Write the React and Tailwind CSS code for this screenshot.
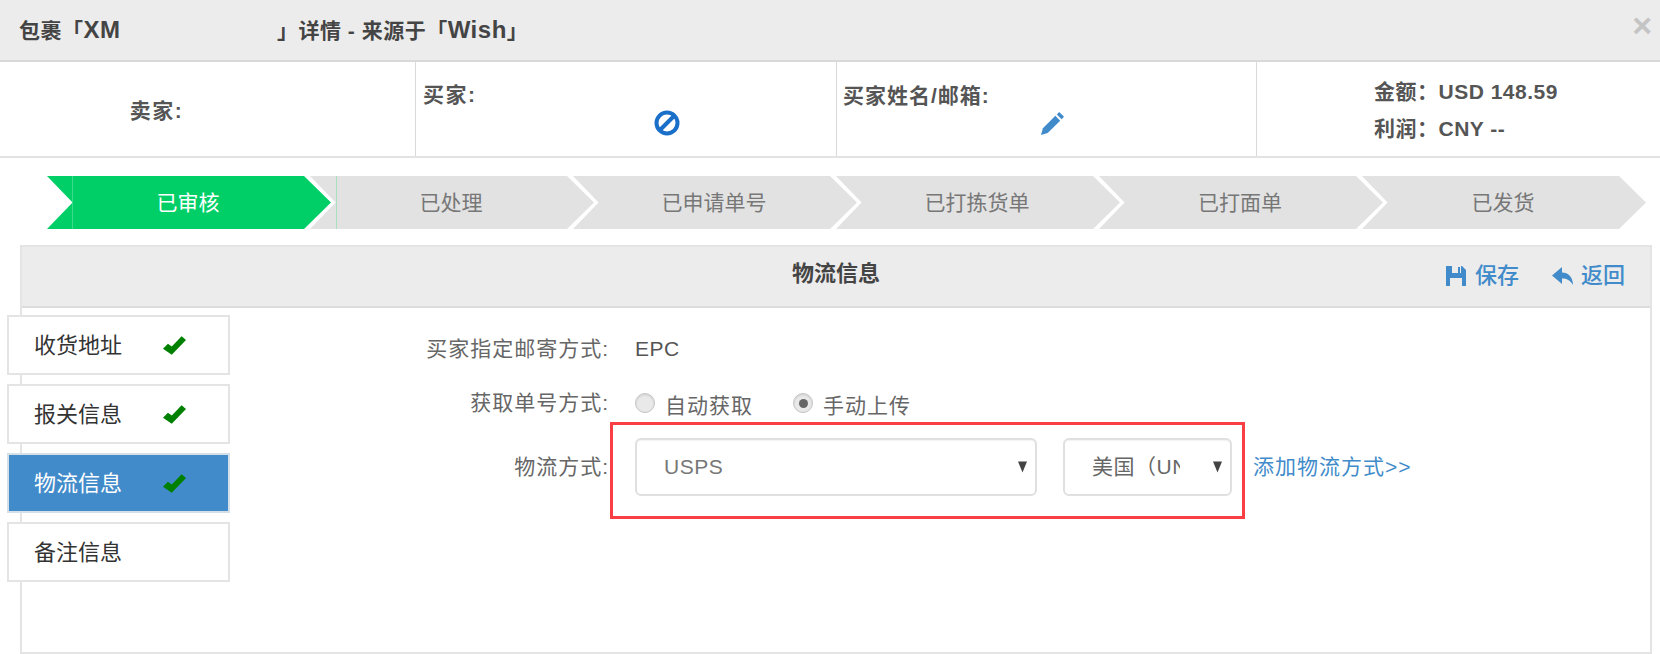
import React from "react";

const FONT = "font-['Liberation_Sans','Noto_Sans_CJK_SC',sans-serif]";

const steps = ["已审核", "已处理", "已申请单号", "已打拣货单", "已打面单", "已发货"];
const tabs = ["收货地址", "报关信息", "物流信息", "备注信息"];

function Caret() {
    return (
        <svg viewBox="0 0 10 12" className="absolute right-[8px] top-1/2 h-[12px] w-[9px] -translate-y-1/2 fill-[#444]">
            <path d="M0 0H10L5 12Z" />
        </svg>
    );
}

function BanIcon() {
    return (
        <svg viewBox="0 0 26 26" className="ml-[231px] mt-[3px] h-[26px] w-[26px] fill-none stroke-[#1a6fc9] stroke-[4]">
            <circle cx="13" cy="13" r="10.5" />
            <path d="M6 20L20 6" />
        </svg>
    );
}

function PencilIcon() {
    return (
        <svg viewBox="0 0 24 24" className="ml-[198px] mt-[4px] h-[23px] w-[23px] fill-[#428bca]">
            <path d="M0 24L2 17L15 4L20 9L7 22Z" />
            <path d="M16.5 2.5L19 0L24 5L21.5 7.5Z" />
        </svg>
    );
}

function CheckIcon() {
    return (
        <svg viewBox="0 0 21 17" className="h-[19px] w-[23px] fill-[#008000]">
            <path d="M0 11.5L4.5 7L8 9.5L17 0L21 3.5L8 17Z" />
        </svg>
    );
}

function SaveIcon() {
    return (
        <svg viewBox="0 0 20 20" className="h-[20px] w-[20px] fill-[#428bca]">
            <path d="M0 0H6V7H12V1H14V7H15V0H16L20 4V20H16V12H4V20H0Z" />
        </svg>
    );
}

function BackIcon() {
    return (
        <svg viewBox="0 0 21 18" className="h-[18px] w-[21px] fill-[#428bca]">
            <path d="M0 8.5L10 0V5.5C16 5.5 21 10 21 18C18 13 15 11.5 10 11.5V17Z" />
        </svg>
    );
}

function Radio({ checked }) {
    return (
        <span className="flex h-[20px] w-[20px] shrink-0 items-center justify-center rounded-full border border-[#c4c4c4] bg-[#e9e9e9] shadow-[inset_0_1px_2px_rgba(0,0,0,0.12)]">
            {checked && <span className="h-[9px] w-[9px] rounded-full bg-[#666]"></span>}
        </span>
    );
}

export default function App() {
    return (
        <div className={`${FONT} relative h-[654px] w-[1660px] overflow-hidden bg-white text-[#555]`}>
            {/* title bar */}
            <div className="flex h-[62px] items-center justify-between border-b-2 border-[#d9d9d9] bg-[#ececec] pl-[19px] pr-[8px]">
                <div className="flex items-baseline text-[21px] font-bold tracking-[0.5px] text-[#444]">
                    <span className="w-[258px] whitespace-nowrap">包裹「<span className="text-[24px]">XM</span></span>
                    <span className="whitespace-nowrap">」详情 - 来源于「<span className="text-[24px]">Wish</span>」</span>
                </div>
                <span className="mb-[10px] text-[34px] font-bold leading-none text-[#c4c4c4]">×</span>
            </div>

            {/* seller / buyer row */}
            <div className="flex h-[96px] border-b-2 border-[#e2e2e2] text-[21px] font-bold tracking-[0.5px] text-[#555]">
                <div className="flex w-[416px] items-center justify-center border-r border-[#d9d9d9] pr-[102px] pt-[4px] tracking-[1.5px]">卖家:</div>
                <div className="flex w-[421px] flex-col border-r border-[#d9d9d9] pl-[7px] pt-[21px]">
                    <span className="leading-[24px] tracking-[1.5px]">买家:</span>
                    <BanIcon />
                </div>
                <div className="flex w-[420px] flex-col border-r border-[#d9d9d9] pl-[6px] pt-[22px]">
                    <span className="leading-[24px] tracking-[1px]">买家姓名/邮箱:</span>
                    <PencilIcon />
                </div>
                <div className="flex flex-col gap-[13px] pl-[117px] pt-[18px] leading-[24px]">
                    <span>金额：USD 148.59</span>
                    <span>利润：CNY --</span>
                </div>
            </div>

            {/* progress steps */}
            <div className="mt-[18px] flex h-[53px] pl-[47px]">
                {steps.map((s, i) => (
                    <div
                        key={s}
                        className={`relative flex h-full w-[284px] shrink-0 items-center justify-center pr-[2px] text-[21px] [clip-path:polygon(0_0,90.5%_0,100%_50%,90.5%_100%,0_100%,9%_50%)] ${i === 0 ? "bg-[#00cf68] text-white" : "-ml-[21px] bg-[#e2e2e2] text-[#777]"}`}
                    >
                        {i === 0 && <span className="absolute inset-y-0 left-[25px] w-px bg-[#3cdc8c]"></span>}
                        {i === 1 && <span className="absolute inset-y-0 left-[26px] w-px bg-[#a8dfc0]"></span>}
                        {s}
                    </div>
                ))}
            </div>

            {/* logistics panel */}
            <div className="ml-[20px] mr-[8px] mt-[16px] h-[409px] border-2 border-[#e4e4e4]">
                <div className="relative flex h-[61px] items-center justify-center border-b-2 border-[#dcdcdc] bg-[#ececec] pb-[6px] text-[22px] font-bold text-[#444]">
                    物流信息
                    <div className="absolute right-[25px] top-[12px] flex gap-[33px] text-[22px] font-medium text-[#428bca]">
                        <span className="flex items-center gap-[9px]"><SaveIcon />保存</span>
                        <span className="flex items-center gap-[8px]"><BackIcon />返回</span>
                    </div>
                </div>

                <div className="flex">
                    {/* side tabs */}
                    <div className="-ml-[15px] mt-[7px] flex w-[223px] shrink-0 flex-col gap-[9px]">
                        {tabs.map((t, i) => (
                            <div
                                key={t}
                                className={`flex h-[60px] items-center border-2 pl-[25px] text-[22px] ${i === 2 ? "border-[#d5dfe8] bg-[#428bca] text-white" : "border-[#e4e4e4] bg-white text-[#333]"}`}
                            >
                                <span className="w-[129px]">{t}</span>
                                {i < 3 && <CheckIcon />}
                            </div>
                        ))}
                    </div>

                    {/* form */}
                    <div className="flex flex-col pt-[26px] text-[21px] tracking-[1px] text-[#666]">
                        <div className="flex h-[30px] items-center">
                            <span className="w-[379px] text-right">买家指定邮寄方式:</span>
                            <span className="ml-[26px] tracking-[0.5px] text-[#555]">EPC</span>
                        </div>
                        <div className="mt-[22px] flex h-[34px] items-center">
                            <span className="w-[379px] text-right">获取单号方式:</span>
                            <span className="ml-[26px]"><Radio /></span>
                            <span className="ml-[10px] pt-[5px]">自动获取</span>
                            <span className="ml-[40px]"><Radio checked /></span>
                            <span className="ml-[10px] pt-[5px]">手动上传</span>
                        </div>
                        <div className="mt-[18px] flex h-[58px] items-center">
                            <span className="w-[379px] text-right">物流方式:</span>
                            <div className="relative ml-[26px] flex h-full w-[402px] items-center rounded-[6px] border-2 border-[#e0e0e0] pl-[27px] tracking-[0.5px] text-[#777] shadow-[inset_0_1px_1px_rgba(0,0,0,0.05)]">
                                USPS
                                <Caret />
                            </div>
                            <div className="relative ml-[26px] flex h-full w-[169px] items-center rounded-[6px] border-2 border-[#e0e0e0] pl-[27px] tracking-[0.5px] text-[#666] shadow-[inset_0_1px_1px_rgba(0,0,0,0.05)]">
                                <span className="w-[88px] overflow-hidden whitespace-nowrap">美国（UN</span>
                                <Caret />
                            </div>
                            <span className="ml-[21px] text-[#428bca]">添加物流方式&gt;&gt;</span>
                        </div>
                    </div>
                </div>
            </div>

            {/* red annotation box */}
            <div className="absolute left-[610px] top-[422px] h-[97px] w-[635px] border-[3px] border-[#f93e44]"></div>
        </div>
    );
}
